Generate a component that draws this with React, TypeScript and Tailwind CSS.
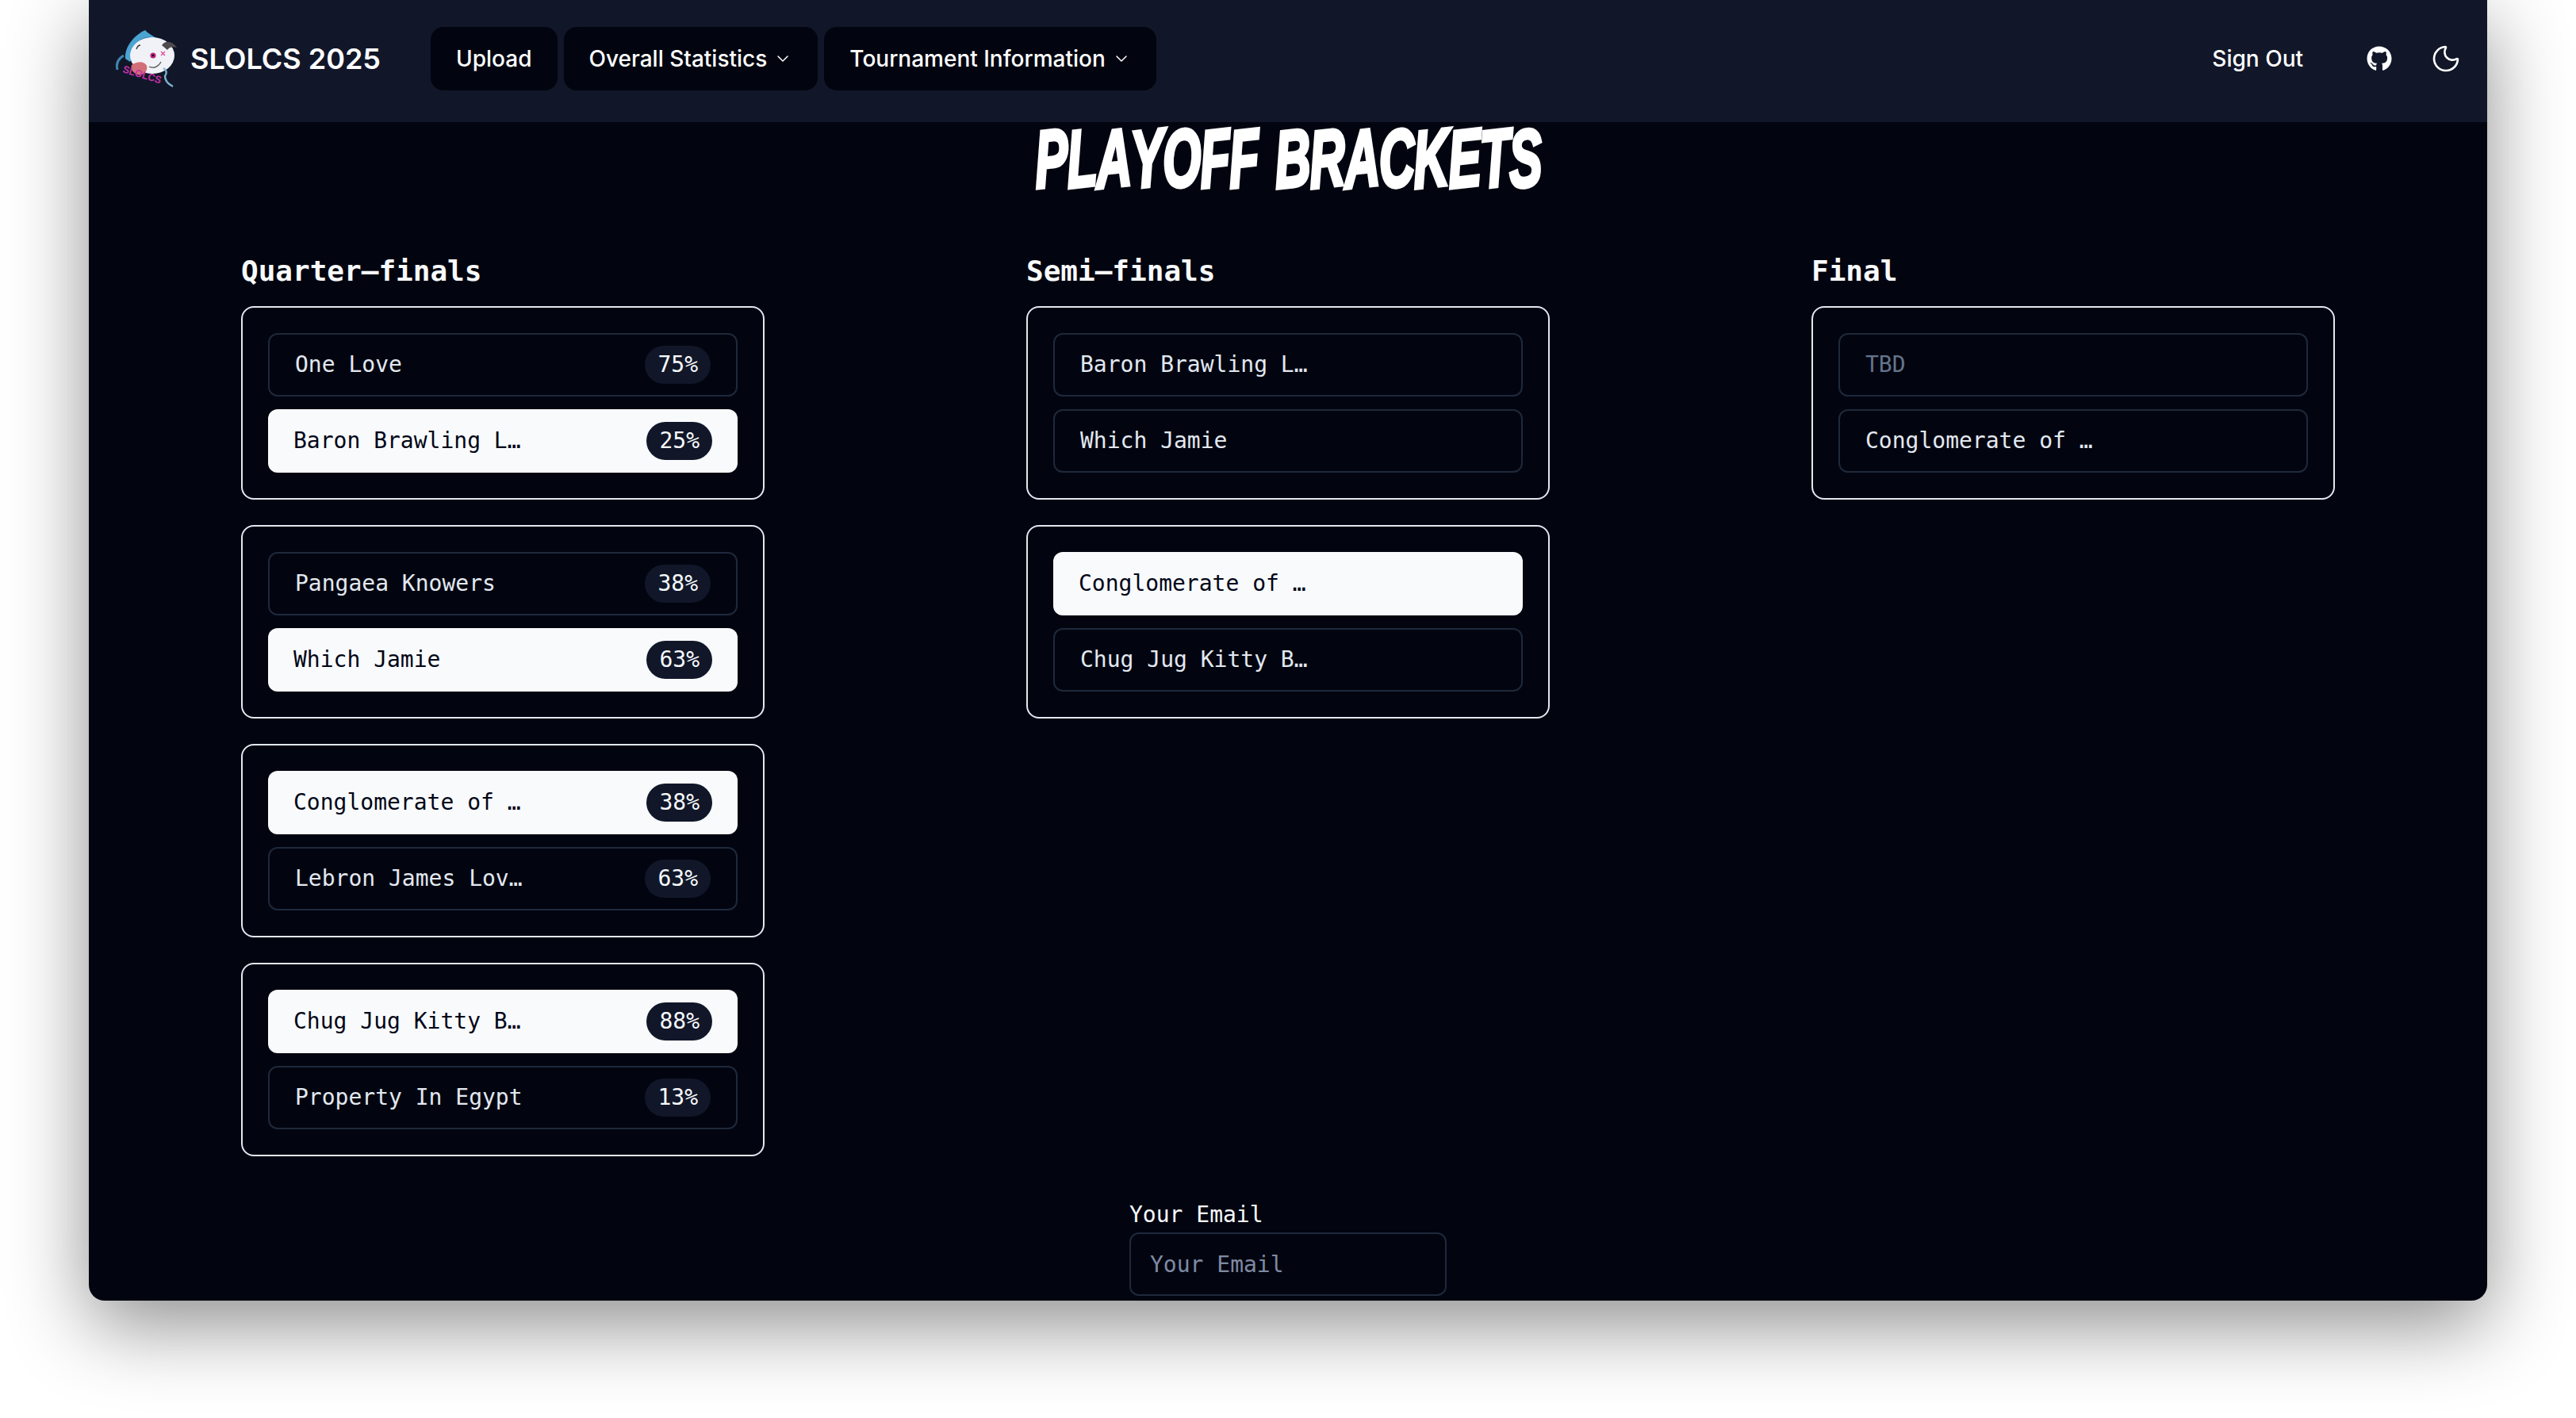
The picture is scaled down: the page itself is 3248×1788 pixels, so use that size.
import React from "react";
import { Moon, ChevronDown } from "lucide-react";
import { FaGithub } from "react-icons/fa";

type Row = { name: string; pct?: string; win?: boolean; dim?: boolean };
type Column = { title: string; matches: Row[][] };

const columns: Column[] = [
  {
    title: "Quarter–finals",
    matches: [
      [{ name: "One Love", pct: "75%" }, { name: "Baron Brawling L…", pct: "25%", win: true }],
      [{ name: "Pangaea Knowers", pct: "38%" }, { name: "Which Jamie", pct: "63%", win: true }],
      [{ name: "Conglomerate of …", pct: "38%", win: true }, { name: "Lebron James Lov…", pct: "63%" }],
      [{ name: "Chug Jug Kitty B…", pct: "88%", win: true }, { name: "Property In Egypt", pct: "13%" }],
    ],
  },
  {
    title: "Semi–finals",
    matches: [
      [{ name: "Baron Brawling L…" }, { name: "Which Jamie" }],
      [{ name: "Conglomerate of …", win: true }, { name: "Chug Jug Kitty B…" }],
    ],
  },
  {
    title: "Final",
    matches: [[{ name: "TBD", dim: true }, { name: "Conglomerate of …" }]],
  },
];

function Logo() {
  return (
    <svg viewBox="0 0 90 84" className="w-[90px] h-[84px] shrink-0 -translate-y-[2px]">
      <path d="M8 58 C6 50 9 44 16 40" stroke="#3d86ad" strokeWidth="3" fill="none" />
      <path d="M18 44 C17 28 30 14 43 8 C47 13 54 15 62 22 L30 38 L24 48 Z" fill="#4ba3d1" />
      <path d="M24 36 C29 24 38 17 50 16 C44 20 36 24 31 36 Z" fill="#2a78a8" />
      <ellipse cx="52" cy="40" rx="28" ry="23" fill="#f1f2f7" />
      <path d="M64 27 C68 21 77 21 83 30 C77 28 73 30 71 33 Z" fill="#4d4b4c" />
      <circle cx="53" cy="40" r="3.6" fill="#c2257f" />
      <circle cx="53" cy="40" r="1.4" fill="#1a1020" />
      <path d="M63 35 L68 40 M68 35 L63 40" stroke="#e0559c" strokeWidth="1.5" />
      <path d="M32 32 C33 29 35 27 37 27" stroke="#333" strokeWidth="1.3" fill="none" />
      <path d="M48 54 C54 57 60 54 63 48" stroke="#555" strokeWidth="1.2" fill="none" />
      <path d="M26 52 C33 47 42 47 45 53 C47 60 40 66 33 64 C28 62 24 57 26 52 Z" fill="#d26f78" />
      <path d="M66 56 C70 58 71 62 68 66 C68 72 72 76 78 79" stroke="#7fb5d4" strokeWidth="2.4" fill="none" />
      <text
        x="14"
        y="61"
        transform="rotate(17 14 61)"
        fontSize="13"
        fontWeight="700"
        fill="#c931a8"
        fontFamily="'Liberation Sans', sans-serif"
        textLength="50"
        lengthAdjust="spacingAndGlyphs"
      >
        SLOLCS
      </text>
    </svg>
  );
}

function NavButton({ label, chevron }: { label: string; chevron?: boolean }) {
  return (
    <button className="h-20 px-8 rounded-2xl bg-[#020510] text-white text-[28px] font-medium flex items-center">
      {label}
      {chevron && <ChevronDown className="w-6 h-6 ml-2" strokeWidth={1.5} />}
    </button>
  );
}

function TeamRow({ row }: { row: Row }) {
  const base = "h-20 rounded-xl flex items-center justify-between px-8 text-[28px]";
  const tone = row.win
    ? "bg-[#f8fafc] text-[#020617]"
    : `border-2 border-[#1e293b] ${row.dim ? "text-[#64748b]" : "text-[#e2e8f0]"}`;
  return (
    <div className={`${base} ${tone}`}>
      <span>{row.name}</span>
      {row.pct && (
        <span className="h-12 px-4 rounded-full bg-[#111729] text-[#f8fafc] flex items-center">{row.pct}</span>
      )}
    </div>
  );
}

function Title() {
  const letter = "inline-block -rotate-[4deg]";
  return (
    <h1 className="h-[92px] flex items-center justify-center text-white font-['Liberation_Sans',sans-serif] font-bold italic text-[102px] leading-none scale-x-[0.61] [-webkit-text-stroke:5px_white] whitespace-nowrap tracking-[-2px]">
      {"PLAYOFF".split("").map((c, i) => (
        <span key={i} className={letter}>
          {c}
        </span>
      ))}
      <span className="inline-block w-[34px]"> </span>
      {"BRACKETS".split("").map((c, i) => (
        <span key={i} className={letter}>
          {c}
        </span>
      ))}
    </h1>
  );
}

export default function App() {
  return (
    <div className="w-[3248px] h-[1788px] bg-white overflow-hidden px-[112px]">
      <div className="h-[1640px] rounded-b-[20px] overflow-hidden bg-[#020510] shadow-[0_30px_100px_rgba(0,0,0,0.45)]">
        <nav className="h-[154px] bg-[#111729] flex items-center pb-[6px] pl-7 pr-8 font-['Inter',sans-serif] text-white">
          <div className="flex items-center gap-[10px] mr-[63px]">
            <Logo />
            <span className="text-[36px] font-semibold leading-none">SLOLCS 2025</span>
          </div>
          <div className="flex gap-2">
            <NavButton label="Upload" />
            <NavButton label="Overall Statistics" chevron />
            <NavButton label="Tournament Information" chevron />
          </div>
          <div className="ml-auto flex items-center">
            <span className="text-[28px] font-medium">Sign Out</span>
            <FaGithub className="w-8 h-8 ml-20" />
            <Moon className="w-10 h-10 ml-12" strokeWidth={1.6} />
          </div>
        </nav>
        <main className="font-['DejaVu_Sans_Mono',monospace]">
          <Title />
          <div className="flex justify-between px-[192px] mt-[74px]">
            {columns.map((c) => (
              <div key={c.title} className="w-[660px]">
                <h2 className="text-[36px] font-bold text-[#f8fafc] leading-[44px] mb-[22px]">{c.title}</h2>
                <div className="flex flex-col gap-8">
                  {c.matches.map((m, i) => (
                    <div key={i} className="border-2 border-[#e2e8f0] rounded-2xl p-8 flex flex-col gap-4">
                      {m.map((r, j) => (
                        <TeamRow key={j} row={r} />
                      ))}
                    </div>
                  ))}
                </div>
              </div>
            ))}
          </div>
          <div className="w-[400px] mx-auto mt-[54px] flex flex-col">
            <label className="text-[28px] leading-[40px] text-[#f8fafc] mb-[2px]">Your Email</label>
            <input
              placeholder="Your Email"
              className="h-20 border-2 border-[#1e293b] rounded-xl bg-transparent px-6 text-[28px] placeholder:text-[#7f8aa3] outline-none"
            />
          </div>
        </main>
      </div>
    </div>
  );
}
